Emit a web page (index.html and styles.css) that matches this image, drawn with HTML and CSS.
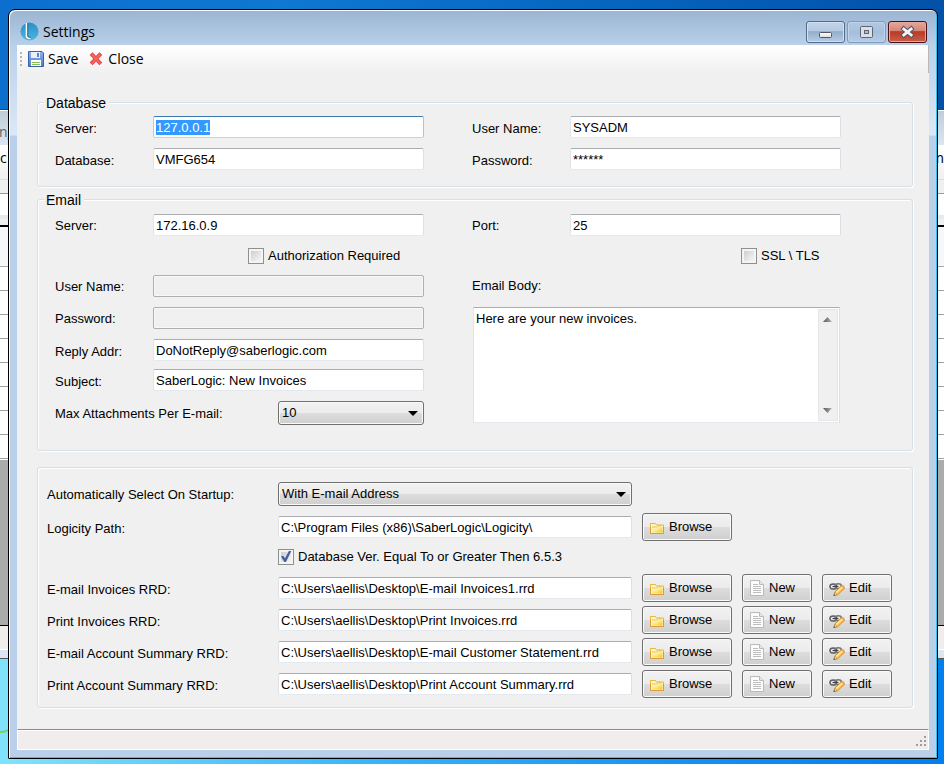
FILE: index.html
```html
<!DOCTYPE html>
<html lang="en">
<head>
<meta charset="utf-8">
<meta name="viewport" content="width=device-width, initial-scale=1">
<title>Settings</title>
<link rel="stylesheet" href="styles.css">
</head>
<body>
<svg class="sprite" aria-hidden="true">
  <defs>
    <linearGradient id="folderFill" x1="0" y1="0" x2="1" y2="1"><stop offset="0" stop-color="#fffbd0"/><stop offset=".5" stop-color="#fbe98a"/><stop offset="1" stop-color="#f2c419"/></linearGradient>
    <linearGradient id="globeFill" x1="0" y1="0" x2="0" y2="1"><stop offset="0" stop-color="#2a8fc6"/><stop offset="1" stop-color="#4db5e0"/></linearGradient>
    <linearGradient id="diskFill" x1="0" y1="0" x2="0" y2="1"><stop offset="0" stop-color="#8fb3ea"/><stop offset="1" stop-color="#4a7bcb"/></linearGradient>
    <linearGradient id="glyphFill" x1="0" y1="0" x2="0" y2="1"><stop offset="0" stop-color="#fff"/><stop offset="1" stop-color="#dcdcdc"/></linearGradient>
    <linearGradient id="arrowFill" x1="0" y1="0" x2="1" y2="0"><stop offset="0" stop-color="#555"/><stop offset="1" stop-color="#b4b4b4"/></linearGradient>
  </defs>
  <symbol id="folder" viewBox="0 0 16 16">
    <path d="M1.500 14V4.500H6.500L7.500 6H14.500V14.500H1.500Z" fill="#fdf6c4" stroke="#e8b540"/>
    <path d="M3 13.500V9.500H8L9.500 7.500H13.500V13.500Z" fill="url(#folderFill)"/>
    <path d="M3 8H7.500L9 6.800H12.500" fill="none" stroke="#e8bf45"/>
    <path d="M1.500 8V14.500H14.500V8" fill="none" stroke="#e0963a"/>
  </symbol>
  <symbol id="page" viewBox="0 0 16 18">
    <path d="M1.500 1.500H10.500L14.500 5.500V16.500H1.500Z" fill="#fcfcfc" stroke="#b9b9b9"/>
    <path d="M10.500 1.500V5.500H14.500" fill="#e6e6e6" stroke="#b9b9b9"/>
    <path d="M4 5.500H9M4 7.500H12M4 9.500H12M4 11.500H12M4 13.500H12" stroke="#bdbdbd"/>
  </symbol>
  <symbol id="edit" viewBox="0 0 16 16">
    <ellipse cx="4.300" cy="6.500" rx="3.400" ry="2.600" fill="none" stroke="#5d5d5d" stroke-width="1.500"/>
    <ellipse cx="9.300" cy="6.300" rx="3.200" ry="2.500" fill="none" stroke="#777" stroke-width="1.500"/>
    <path d="M3.500 6.500H9.500" stroke="#444" stroke-width="1.200"/>
    <path d="M5.800 12L12.700 5.600L15.500 8.400L8.600 14.700L5 15.500Z" fill="#f9c846" stroke="#b97a2b" stroke-width=".8"/>
    <path d="M7.300 12.500L13.500 6.800" stroke="#ffeb9c" stroke-width="1.300"/>
    <path d="M12.200 6L13.500 4.900Q15.800 5.200 15.800 7.700L14.800 8.700Z" fill="#ef9d5a"/>
    <path d="M5.800 12.200L8.300 14.600L4.800 15.700Z" fill="#f3dcb8" stroke="#a8793f" stroke-width=".5"/>
    <path d="M5.200 14.200L6.300 15.200L4.600 15.800Z" fill="#222"/>
  </symbol>
</svg>

<div class="backdrop" aria-hidden="true">
  <div class="back-title">ng</div>
  <div class="back-menu"><span>c</span><span>m</span></div>
  <div class="back-band back-band-plain"></div>
  <div class="back-band back-band-white"></div>
  <div class="back-band back-band-rule"></div>
  <div class="back-band back-band-head"></div>
  <div class="back-rows"></div>
  <div class="back-space"></div>
  <div class="back-status"></div>
</div>
<svg class="leaf" viewBox="0 0 8 6" aria-hidden="true"><path d="M0 4Q5 4 8 2" fill="none" stroke="#7ccf4a" stroke-width="2"/></svg>

<main class="window">
  <header class="titlebar">
    <svg class="app-icon" viewBox="0 0 19 19" aria-hidden="true"><circle cx="9.500" cy="9.500" r="9" fill="url(#globeFill)"/><path d="M6.500 1V14.500Q6.700 16.300 10.500 16.500" fill="none" stroke="#fff" stroke-width="1.600"/><path d="M7.800 1V14Q8 15.300 10.800 15.500" fill="none" stroke="#12608f" stroke-width=".8"/></svg>
    <h1 class="title">Settings</h1>
    <div class="captions">
      <button class="caption" type="button" aria-label="Minimize"><svg viewBox="0 0 37 20"><rect x="12.500" y="10.500" width="12" height="5" rx="1" fill="url(#glyphFill)" stroke="#535666"/></svg></button>
      <button class="caption caption-dim" type="button" aria-label="Maximize"><svg viewBox="0 0 37 20"><rect x="12.500" y="4.500" width="12" height="11" rx="1" fill="#dcdfe3" stroke="#5c6478"/><rect x="16.500" y="8.500" width="4" height="3" fill="#a9c0da" stroke="#5c6478"/></svg></button>
      <button class="caption caption-close" type="button" aria-label="Close window"><svg viewBox="0 0 37 20"><path d="M14.800 7L22.200 13M22.200 7L14.800 13" stroke="#535666" stroke-width="4.800" stroke-linecap="square"/><path d="M14.800 7L22.200 13M22.200 7L14.800 13" stroke="#f4f4f4" stroke-width="2.800" stroke-linecap="square"/></svg></button>
    </div>
  </header>

  <div class="client">
    <div class="toolbar">
      <span class="grip"></span>
      <button class="tool" type="button">
        <svg class="tool-icon" viewBox="0 0 16 16" aria-hidden="true"><path d="M.500.500H14L15.500 2V15.500H.500Z" fill="url(#diskFill)" stroke="#3a62ab"/><rect x="3" y="1" width="9" height="6" fill="#e9effa"/><rect x="9" y="2" width="2" height="4" fill="#5c84c8"/><rect x="3" y="9" width="10" height="6" fill="#fff"/><path d="M4 11.500H12M4 13.500H12" stroke="#86bf57"/></svg>
        Save
      </button>
      <button class="tool" type="button">
        <svg class="tool-icon" viewBox="0 0 16 16" aria-hidden="true"><path d="M4.500 4L11.500 11.500M11.500 4L4.500 11.500" stroke="#dc4643" stroke-width="4" stroke-linecap="square"/><path d="M4.500 4L11.500 11.500M11.500 4L4.500 11.500" stroke="#fa5f5b" stroke-width="2.400" stroke-linecap="square"/></svg>
        Close
      </button>
    </div>

    <form class="content">
      <fieldset class="group">
        <legend>Database</legend>
        <div class="columns columns-database">
          <div class="stack">
            <div class="row"><label for="db-server">Server:</label><input class="text" id="db-server" type="text" value="127.0.0.1" autofocus></div>
            <div class="row"><label for="db-name">Database:</label><input class="text" id="db-name" type="text" value="VMFG654"></div>
          </div>
          <div class="stack">
            <div class="row"><label for="db-user">User Name:</label><input class="text" id="db-user" type="text" value="SYSADM"></div>
            <div class="row"><label for="db-pass">Password:</label><input class="text" id="db-pass" type="text" value="******" autocomplete="off"></div>
          </div>
        </div>
      </fieldset>

      <fieldset class="group group-email">
        <legend>Email</legend>
        <div class="columns columns-email">
          <div class="stack">
            <div class="row"><label for="mail-server">Server:</label><input class="text" id="mail-server" type="text" value="172.16.0.9"></div>
            <div class="check-row check-auth"><input class="check" id="auth" type="checkbox"><label for="auth">Authorization Required</label></div>
            <div class="row"><label for="mail-user">User Name:</label><input class="text" id="mail-user" type="text" disabled></div>
            <div class="row"><label for="mail-pass">Password:</label><input class="text" id="mail-pass" type="password" disabled></div>
            <div class="row row-low"><label for="reply">Reply Addr:</label><input class="text" id="reply" type="text" value="DoNotReply@saberlogic.com"></div>
            <div class="row row-low row-tight"><label for="subject">Subject:</label><input class="text" id="subject" type="text" value="SaberLogic: New Invoices"></div>
            <div class="row row-wide"><label for="max">Max Attachments Per E-mail:</label><span class="combo"><select id="max"><option>10</option></select></span></div>
          </div>
          <div class="stack">
            <div class="row"><label for="port">Port:</label><input class="text" id="port" type="text" value="25"></div>
            <div class="check-row check-ssl"><input class="check" id="ssl" type="checkbox"><label for="ssl">SSL \ TLS</label></div>
            <label class="body-label" for="body">Email Body:</label>
            <div class="memo">
              <textarea id="body">Here are your new invoices.</textarea>
              <span class="scroll" aria-hidden="true">
                <svg viewBox="0 0 9 5"><path d="M0 5L4.500 0L9 5Z" fill="url(#arrowFill)"/></svg>
                <svg viewBox="0 0 9 5"><path d="M0 0L4.500 5L9 0Z" fill="url(#arrowFill)"/></svg>
              </span>
            </div>
          </div>
        </div>
      </fieldset>

      <fieldset class="group group-files" aria-label="Reports">
        <div class="files">
          <label class="combo-label" for="startup">Automatically Select On Startup:</label>
          <span class="combo"><select id="startup"><option>With E-mail Address</option></select></span>

          <label for="path">Logicity Path:</label>
          <input class="text" id="path" type="text" value="C:\Program Files (x86)\SaberLogic\Logicity\">
          <button class="btn" type="button"><svg class="ico" aria-hidden="true"><use href="#folder"/></svg>Browse</button>

          <div class="check-row check-version"><input class="check" id="ver" type="checkbox" checked><label for="ver">Database Ver. Equal To or Greater Then 6.5.3</label></div>

          <label for="f1">E-mail Invoices RRD:</label>
          <input class="text" id="f1" type="text" value="C:\Users\aellis\Desktop\E-mail Invoices1.rrd">
          <button class="btn" type="button"><svg class="ico" aria-hidden="true"><use href="#folder"/></svg>Browse</button>
          <button class="btn" type="button"><svg class="ico ico-tall" aria-hidden="true"><use href="#page"/></svg>New</button>
          <button class="btn" type="button"><svg class="ico" aria-hidden="true"><use href="#edit"/></svg>Edit</button>

          <label for="f2">Print Invoices RRD:</label>
          <input class="text" id="f2" type="text" value="C:\Users\aellis\Desktop\Print Invoices.rrd">
          <button class="btn" type="button"><svg class="ico" aria-hidden="true"><use href="#folder"/></svg>Browse</button>
          <button class="btn" type="button"><svg class="ico ico-tall" aria-hidden="true"><use href="#page"/></svg>New</button>
          <button class="btn" type="button"><svg class="ico" aria-hidden="true"><use href="#edit"/></svg>Edit</button>

          <label for="f3">E-mail Account Summary RRD:</label>
          <input class="text" id="f3" type="text" value="C:\Users\aellis\Desktop\E-mail Customer Statement.rrd">
          <button class="btn" type="button"><svg class="ico" aria-hidden="true"><use href="#folder"/></svg>Browse</button>
          <button class="btn" type="button"><svg class="ico ico-tall" aria-hidden="true"><use href="#page"/></svg>New</button>
          <button class="btn" type="button"><svg class="ico" aria-hidden="true"><use href="#edit"/></svg>Edit</button>

          <label for="f4">Print Account Summary RRD:</label>
          <input class="text" id="f4" type="text" value="C:\Users\aellis\Desktop\Print Account Summary.rrd">
          <button class="btn" type="button"><svg class="ico" aria-hidden="true"><use href="#folder"/></svg>Browse</button>
          <button class="btn" type="button"><svg class="ico ico-tall" aria-hidden="true"><use href="#page"/></svg>New</button>
          <button class="btn" type="button"><svg class="ico" aria-hidden="true"><use href="#edit"/></svg>Edit</button>
        </div>
      </fieldset>
    </form>

    <footer class="status">
      <svg class="resize" viewBox="0 0 11 11" aria-hidden="true"><path d="M8 0h2v2h-2zM8 4h2v2h-2zM4 4h2v2h-2zM8 8h2v2h-2zM4 8h2v2h-2zM0 8h2v2h-2z" fill="#a09c9b"/></svg>
    </footer>
  </div>
</main>
<script src="script.js"></script>
</body>
</html>
```
FILE: script.js
```js
const server = document.getElementById('db-server');
server.focus();
server.select();
```
FILE: styles.css
```css
* { box-sizing: border-box; }

body {
  margin: 0;
  min-height: 100vh;
  padding: 9px 6px 5px 8px;
  display: flex;
  position: relative;
  font: 13px/16px "Liberation Sans", Arial, sans-serif;
  color: #000;
  background:
    linear-gradient(90deg, #7fe3fc, #35b4fb 40%, #1793f6 70%, #007fee) bottom / 100% 106px no-repeat,
    linear-gradient(90deg, #0c6fce, #0f78d2 30%, #0665bf 65%, #0350a8);
}

.sprite { position: absolute; width: 0; height: 0; }
.leaf { position: absolute; left: 0; bottom: 30px; width: 8px; height: 6px; }

/* Window that sits behind the dialog */
.backdrop {
  position: absolute;
  top: 109px;
  left: 0;
  right: 0;
  height: 550px;
  display: flex;
  flex-direction: column;
  overflow: hidden;
  border-top: 1px solid #36434f;
  border-bottom: 1px solid #555;
  background: #dbe6f2;
}
.back-title {
  height: 35px;
  padding-top: 11px;
  font: 14px/20px "Open Sans", sans-serif;
  color: #666;
  text-indent: -1px;
  background: linear-gradient(#c0ccd9, #dbe6f2);
  border-top: 1px solid #fff;
}
.back-menu {
  height: 35px;
  display: flex;
  justify-content: space-between;
  padding-top: 3px;
  font: 14px/20px "Open Sans", sans-serif;
  background: linear-gradient(#fff, #f0f0f0);
  border-bottom: 1px solid #d5dfe5;
}
.back-band { background: #f0f0f0; }
.back-band-plain { height: 14px; border-bottom: 1px solid #999; }
.back-band-white { height: 21px; background: #fff; }
.back-band-rule { height: 12px; border-top: 4px solid #e3eaf0; border-bottom: 2px solid #000; }
.back-band-head { height: 40px; background: #f5f7fa; border-bottom: 1px solid #aaa; }
.back-rows { height: 193px; background: repeating-linear-gradient(#fff 0 23px, #a0a0a0 23px 24px); }
.back-space { height: 166px; background: #ababab; border-bottom: 1px solid #000; }
.back-status { height: 24px; background: #f1edec; border-bottom: 1px solid #fff; }

/* Window frame */
.window {
  position: relative;
  flex: 1;
  min-width: 0;
  display: flex;
  flex-direction: column;
  padding: 0 8px 8px;
  border: 1px solid #000;
  border-radius: 7px 7px 1px 1px;
  background: linear-gradient(#9ab4d2, #b9d1ea 36px, #dbe8f6 125px, #bad0ea 126px);
  box-shadow: inset 1px 1px 0 #fff, inset -1px -1px 0 #35c4e8;
}
.titlebar {
  height: 35px;
  display: flex;
  align-items: center;
  padding: 8px 2px 0 3px;
}
.app-icon { width: 19px; height: 19px; }
.title {
  margin: 0 auto 0 4px;
  font: 14px/20px "Open Sans", sans-serif;
}
.captions { display: flex; gap: 2px; }
.caption {
  width: 39px;
  height: 22px;
  padding: 0;
  border: 1px solid #556a87;
  border-radius: 3px;
  background: linear-gradient(#c0d3e9, #b5cae2 45%, #94aeca 48%, #b5cce6);
  box-shadow: inset 0 0 0 1px #d3e1f1;
}
.caption svg { display: block; width: 37px; height: 20px; }
.caption-dim {
  border-color: #8299b8;
  background: linear-gradient(#b3c9e2, #a9c1dc 45%, #a4bdda 48%, #b5cde8);
  box-shadow: inset 0 0 0 1px #bfd3ea;
}
.caption-close {
  border-color: #4d1018;
  background: linear-gradient(#e6a89d, #d78476 45%, #b83a25 48%, #c9604a);
  box-shadow: inset 0 0 0 1px #e6a79c;
}

.client {
  flex: 1;
  display: flex;
  flex-direction: column;
  background: #f0f0f0;
}
.toolbar {
  height: 28px;
  display: flex;
  align-items: center;
  gap: 6px;
  padding-left: 3px;
  background: linear-gradient(#fff, #f0f0f0);
  border-right: 1px solid #b8b8b8;
}
.grip {
  width: 2px;
  height: 14px;
  background: repeating-linear-gradient(#b4b4b4 0 2px, transparent 2px 4px);
}
.tool {
  display: flex;
  align-items: center;
  gap: 4px;
  padding: 0;
  border: 0;
  background: none;
  font: 14px/20px "Open Sans", sans-serif;
  color: #000;
}
.tool + .tool { margin-left: 4px; }
.tool-icon { width: 16px; height: 16px; }

/* Form */
.content { padding: 21px 16px 20px 20px; }
.group {
  min-width: 0;
  margin: 0;
  padding: 0 6px;
  border: 1px solid #d5dfe5;
  border-radius: 3px;
  box-shadow: inset 1px 1px 0 #fff, 1px 1px 0 #fff;
}
.group-email { margin-top: 4px; }
.group-files { margin-top: 16px; }
legend {
  padding: 2px 3px 0 2px;
  font-size: 14px;
  line-height: 14px;
  background: #f0f0f0;
}
.columns {
  display: grid;
  grid-template-columns: 1fr 1fr;
  column-gap: 48px;
  align-items: start;
}
.columns-database { padding: 6px 65px 16px 11px; }
.columns-email { padding: 7px 65px 25px 11px; }
.stack { display: flex; flex-direction: column; min-width: 0; }
.row {
  display: grid;
  grid-template-columns: 98px minmax(0, 1fr);
  align-items: center;
}
.row-wide { grid-template-columns: 223px minmax(0, 1fr); }
.row + .row, .check-row + .row { margin-top: 10px; }
.row + .row-tight { margin-top: 8px; }
.row > label { padding-top: 2px; }
.columns-database .row > label, .row-low > label, .files > label { padding-top: 4px; }

.text {
  width: 100%;
  height: 22px;
  padding: 0 2px;
  border: 1px solid;
  border-color: #abadb3 #dbdfe6 #e3e9ef #e2e3ea;
  border-radius: 2px;
  outline: 0;
  background: #fff;
  font: inherit;
  color: #000;
}
.text:focus { border-color: #3d7bad #a4c9e3 #b7d9ed #b5cfe7; }
.text:disabled { border-color: #afafaf; background: #f0f0f0; box-shadow: inset 0 0 0 1px #f8f8f8; }
.text::selection { background: #3399ff; color: #fff; }

.check-row { display: flex; align-items: center; gap: 4px; height: 19px; }
.row + .check-row { margin-top: 10px; }
.check-auth { padding-left: 193px; }
.check-ssl { padding-left: 269px; }
.check {
  flex: none;
  position: relative;
  width: 16px;
  height: 16px;
  margin: 0;
  appearance: none;
  border: 1px solid #8e8f8f;
  background: linear-gradient(135deg, #cbcfd5, #f6f6f6) content-box, #f4f4f4;
  padding: 2px;
}
.check:checked::after {
  content: "";
  position: absolute;
  inset: 1px;
  background: #4b5f9c;
  clip-path: polygon(8% 50%, 26% 44%, 42% 64%, 74% 4%, 94% 4%, 50% 96%, 36% 96%);
}
.body-label { height: 22px; margin-top: 10px; line-height: 22px; }

.memo {
  height: 116px;
  margin: 10px 1px 0;
  display: flex;
  padding: 1px;
  border: 1px solid;
  border-color: #abadb3 #dbdfe6 #e3e9ef #e2e3ea;
  background: #fff;
}
.memo textarea {
  flex: 1;
  min-width: 0;
  padding: 2px 1px;
  border: 0;
  outline: 0;
  resize: none;
  overflow: hidden;
  background: #fff;
  font: inherit;
}
.scroll {
  width: 20px;
  display: flex;
  flex-direction: column;
  justify-content: space-between;
  align-items: center;
  padding: 7px 2px 7px 0;
  border: 1px solid #e6e6e6;
  background: #f0f0f0;
}
.scroll svg { width: 9px; height: 5px; }

.combo { position: relative; display: block; }
.combo select {
  display: block;
  width: 100%;
  height: 24px;
  padding: 0 20px 0 3px;
  appearance: none;
  border: 1px solid #707070;
  border-radius: 3px;
  background: linear-gradient(#f2f2f2, #ebebeb 50%, #dddddd 50%, #cfcfcf);
  box-shadow: inset 0 0 0 1px #fafafa;
  font: inherit;
  color: #000;
}
.combo::after {
  content: "";
  position: absolute;
  right: 6px;
  top: 10px;
  border: 5px solid transparent;
  border-top-color: #000;
  border-bottom: 0;
}

.files {
  display: grid;
  grid-template-columns: 221px minmax(0, 1fr) 90px 70px 70px;
  gap: 4px 10px;
  align-items: center;
  padding: 14px 14px 9px 3px;
}
.files > label { grid-column: 1; }
.files > .combo, .files > .combo-label { margin-bottom: 3px; }
.files > .combo-label { padding-top: 2px; }
.check-version { grid-column: 2 / -1; height: 25px; padding-bottom: 2px; }

.btn {
  height: 28px;
  display: flex;
  align-items: center;
  gap: 4px;
  padding: 0 0 1px 6px;
  border: 1px solid #707070;
  border-radius: 3px;
  background: linear-gradient(#f2f2f2, #ebebeb 50%, #dddddd 50%, #cfcfcf);
  box-shadow: inset 0 0 0 1px #fafafa;
  font: inherit;
  color: #000;
}
.ico { width: 16px; height: 16px; }
.ico-tall { height: 18px; }

.status {
  height: 21px;
  margin-top: auto;
  display: flex;
  justify-content: flex-end;
  align-items: flex-end;
  padding: 0 1px 2px 0;
  border: 1px solid #fff;
  border-top: 1px solid #8c8c8c;
  background: #f1edec;
  box-shadow: inset 0 1px 0 #fff;
}
.resize { width: 11px; height: 11px; }
```
